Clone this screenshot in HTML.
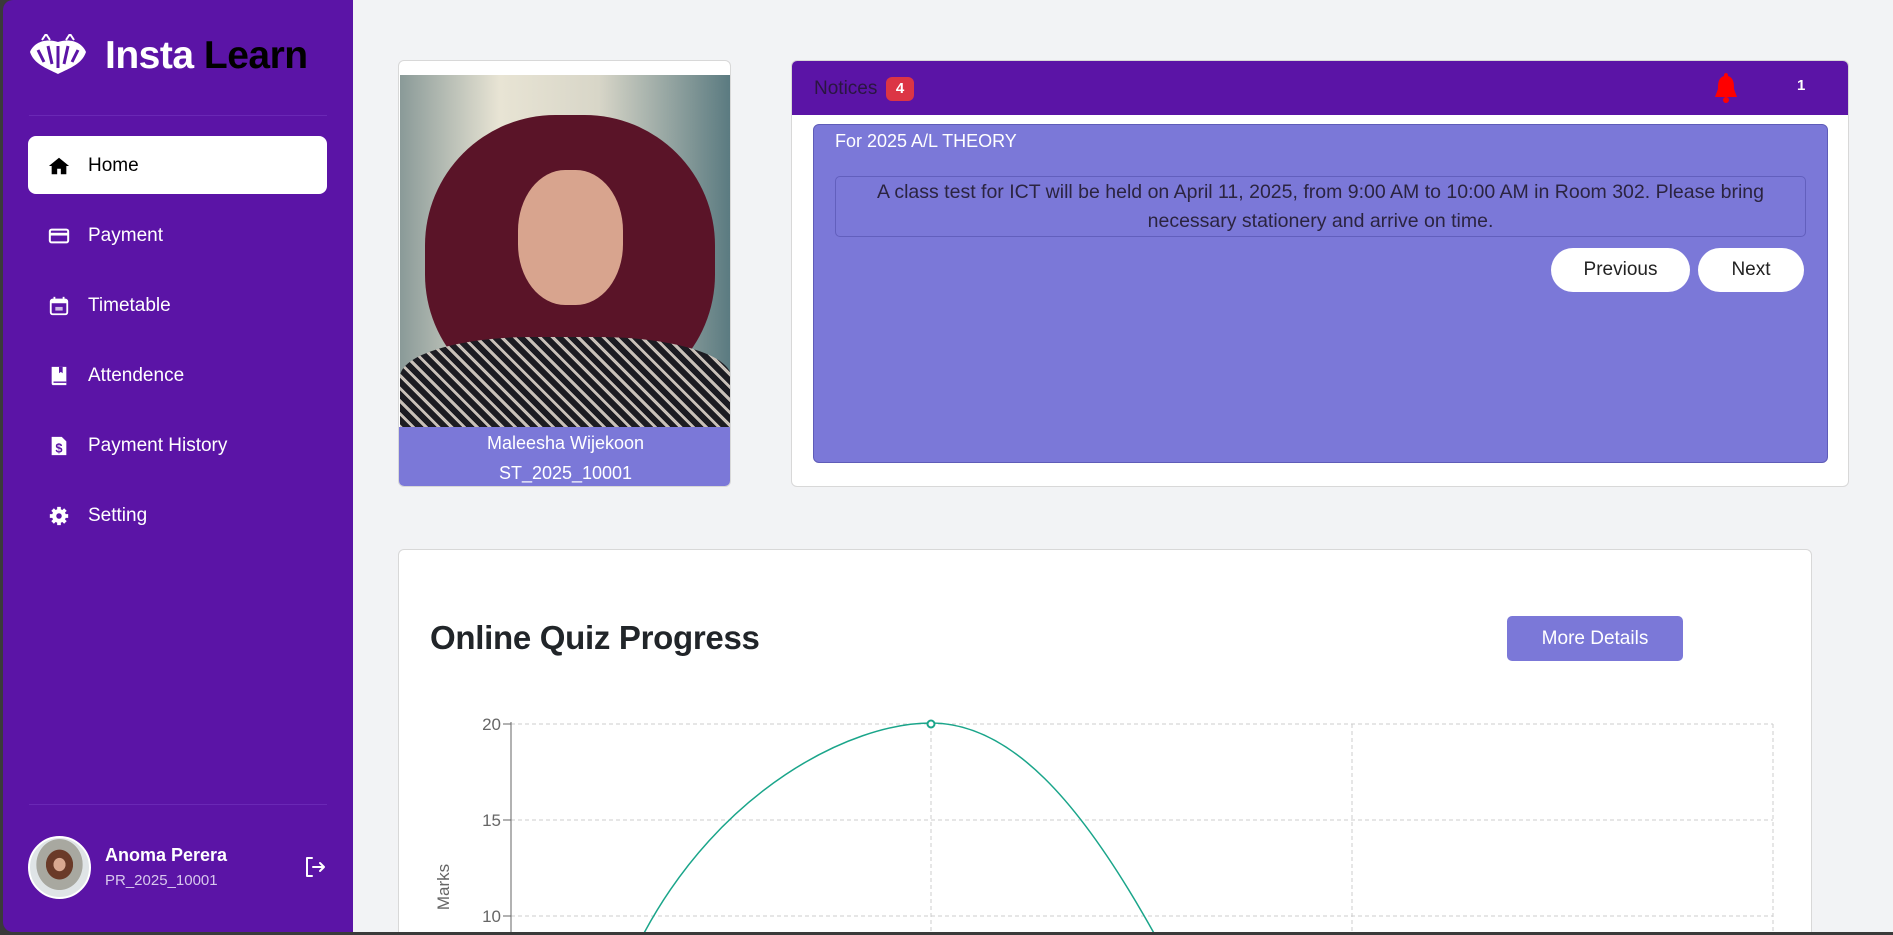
<!DOCTYPE html>
<html><head><meta charset="utf-8"><style>
*{box-sizing:border-box;margin:0;padding:0}
html,body{width:1893px;height:935px;overflow:hidden}
body{background:#3a3a3a;font-family:"Liberation Sans",sans-serif;position:relative}
.abs{position:absolute}
#side{left:3px;top:0;width:350px;height:932px;background:#5b14a6;border-radius:10px 0 0 10px}
#main{left:353px;top:0;width:1540px;height:932px;background:#f2f3f5;overflow:hidden}
.nav{position:absolute;left:48px;color:#fff;font-size:19px;display:flex;align-items:center}
.nav svg{width:22px;height:22px;margin-right:18px}
.card{position:absolute;background:#fff;border:1px solid #d8d8d8;border-radius:6px}
</style></head><body>
<div id="side" class="abs"></div>
<div id="main" class="abs">
<div class="card" style="left:45px;top:549px;width:1414px;height:420px"></div>
</div>

<!-- logo -->
<svg class="abs" style="left:28px;top:34px" width="60" height="40" viewBox="0 0 60 40">
<path d="M30 8 C18 4 6 8 2 18 C6 30 18 34 30 40 C42 34 54 30 58 18 C54 8 42 4 30 8Z" fill="#fff"/>
<path d="M30 12 L30 34 M20 12 L24 30 M40 12 L36 30 M10 16 L16 28 M50 16 L44 28" stroke="#5b14a6" stroke-width="3"/>
<path d="M14 6 L18 0 L22 6 M38 6 L42 0 L46 6" stroke="#fff" stroke-width="2" fill="none"/>
</svg>
<div class="abs" style="left:105px;top:34px;font-size:39px;font-weight:bold;color:#fff;letter-spacing:-0.5px">Insta <span style="color:#000">Learn</span></div>
<div class="abs" style="left:29px;top:115px;width:298px;height:1px;background:#6a28b5"></div>

<div class="abs" style="left:28px;top:136px;width:299px;height:58px;background:#fff;border-radius:8px"></div>
<div class="nav" style="top:155px;color:#000">
<svg viewBox="0 0 24 24"><path d="M12 3 L1 12 L4 12 L4 21 L10 21 L10 15 L14 15 L14 21 L20 21 L20 12 L23 12 Z" fill="#000"/></svg>Home</div>
<div class="nav" style="top:225px"><svg viewBox="0 0 24 24"><rect x="2" y="5" width="20" height="14" rx="2" fill="none" stroke="#fff" stroke-width="2.2"/><rect x="2" y="8.5" width="20" height="3" fill="#fff"/></svg>Payment</div>
<div class="nav" style="top:295px"><svg viewBox="0 0 24 24"><rect x="3" y="5" width="18" height="16" rx="2" fill="none" stroke="#fff" stroke-width="2"/><rect x="3" y="5" width="18" height="4" fill="#fff"/><rect x="6" y="2" width="2" height="4" fill="#fff"/><rect x="16" y="2" width="2" height="4" fill="#fff"/><rect x="8" y="13" width="8" height="4" fill="#fff" opacity=".7"/></svg>Timetable</div>
<div class="nav" style="top:365px"><svg viewBox="0 0 24 24"><path d="M4 2 H20 V22 H6 A2 2 0 0 1 4 20 Z" fill="#fff"/><path d="M12 2 V9 L14 7.5 L16 9 V2" fill="#5b14a6"/><rect x="6" y="18" width="14" height="1.5" fill="#5b14a6"/></svg>Attendence</div>
<div class="nav" style="top:435px"><svg viewBox="0 0 24 24"><path d="M4 2 H15 L20 7 V22 H4 Z" fill="#fff"/><text x="12" y="19" font-size="14" font-weight="bold" text-anchor="middle" fill="#5b14a6" font-family="Liberation Sans">$</text></svg>Payment History</div>
<div class="nav" style="top:505px"><svg viewBox="0 0 24 24"><circle cx="12" cy="12" r="7.5" fill="#fff"/><g stroke="#fff" stroke-width="4"><path d="M12 2V22M2 12H22M5 5L19 19M19 5L5 19"/></g><circle cx="12" cy="12" r="3" fill="#5b14a6"/></svg>Setting</div>

<div class="abs" style="left:29px;top:804px;width:298px;height:1px;background:#6a28b5"></div>
<div class="abs" style="left:28px;top:836px;width:63px;height:63px;border-radius:50%;border:2px solid #fff;background:radial-gradient(ellipse at 50% 45%,#d9a890 0 14%,#6a3a28 15% 32%,#a8a8a0 33% 55%,#dfe4e6 56%)"></div>
<div class="abs" style="left:105px;top:845px;color:#fff;font-size:18px;font-weight:bold">Anoma Perera</div>
<div class="abs" style="left:105px;top:872px;color:#d8c8ee;font-size:15px">PR_2025_10001</div>
<svg class="abs" style="left:303px;top:855px" width="24" height="24" viewBox="0 0 24 24" fill="none" stroke="#fff" stroke-width="2" stroke-linecap="round" stroke-linejoin="round"><path d="M9 3H4V21H9M10 12H21M17 8L21 12L17 16"/></svg>

<!-- profile card -->
<div class="card" style="left:398px;top:60px;width:333px;height:427px;overflow:hidden">
<div class="abs" style="left:1px;top:14px;width:331px;height:352px;background:linear-gradient(90deg,#8a9a98,#e8e4d4 30%,#d8d6c8 60%,#5a7a80);overflow:hidden">
<div class="abs" style="left:25px;top:40px;width:290px;height:290px;border-radius:45%;background:#5a1428"></div>
<div class="abs" style="left:118px;top:95px;width:105px;height:135px;border-radius:45%;background:#d8a48e"></div>
<div class="abs" style="left:0;top:262px;width:331px;height:100px;border-radius:40% 40% 0 0;background:repeating-linear-gradient(45deg,#1c1c22 0 6px,#c8c0b8 6px 9px)"></div>
</div>
<div class="abs" style="left:0;top:366px;width:333px;height:61px;background:#7b78d8;color:#fff;text-align:center;font-size:18px;line-height:30px;padding-top:1px">Maleesha Wijekoon<br>ST_2025_10001</div>
</div>

<!-- notices -->
<div class="card" style="left:791px;top:60px;width:1058px;height:427px;overflow:hidden">
<div class="abs" style="left:0;top:0;width:1058px;height:54px;background:#5b14a6"></div>
<div class="abs" style="left:22px;top:17px;font-size:19px;color:#2a1640">Notices</div>
<div class="abs" style="left:94px;top:16px;width:28px;height:24px;background:#dc3545;border-radius:6px;color:#fff;font-weight:bold;font-size:15px;text-align:center;line-height:24px">4</div>
<svg class="abs" style="left:919px;top:10px" width="30" height="34" viewBox="0 0 30 34"><path d="M15 2 C13 2 13 4 13 5 C7 7 7 13 7 18 L4 26 H26 L23 18 C23 13 23 7 17 5 C17 4 17 2 15 2Z" fill="#f00"/><circle cx="15" cy="29" r="3" fill="#f00"/></svg>
<div class="abs" style="left:1005px;top:16px;font-size:15px;font-weight:bold;color:#fff">1</div>
<div class="abs" style="left:21px;top:63px;width:1015px;height:339px;background:#7b78d8;border:1px solid #5f5cb8;border-radius:6px"></div>
<div class="abs" style="left:43px;top:70px;color:#fff;font-size:18px">For 2025 A/L THEORY</div>
<div class="abs" style="left:43px;top:115px;width:971px;height:61px;border:1px solid #625fbd;border-radius:5px;color:#2b2440;font-size:19.5px;text-align:center;line-height:29px;padding-top:1px">A class test for ICT will be held on April 11, 2025, from 9:00 AM to 10:00 AM in Room 302. Please bring<br>necessary stationery and arrive on time.</div>
<div class="abs" style="left:759px;top:187px;width:139px;height:44px;background:#fff;border-radius:22px;text-align:center;line-height:44px;font-size:19px;color:#222">Previous</div>
<div class="abs" style="left:906px;top:187px;width:106px;height:44px;background:#fff;border-radius:22px;text-align:center;line-height:44px;font-size:19px;color:#222">Next</div>
</div>

<div class="abs" style="left:430px;top:619px;font-size:33px;font-weight:bold;color:#212529;letter-spacing:-0.3px">Online Quiz Progress</div>
<div class="abs" style="left:1507px;top:616px;width:176px;height:45px;background:#7b78d8;border-radius:5px;color:#fff;font-size:19px;text-align:center;line-height:45px">More Details</div>
<svg class="abs" style="left:0;top:0" width="1893" height="932" viewBox="0 0 1893 932">
<g stroke="#ccc" stroke-width="1" stroke-dasharray="4 3" fill="none">
<path d="M511 724H1773M511 820H1773M511 916H1773"/>
<path d="M931 724V932M1352 724V932M1773 724V932"/>
</g>
<path d="M511 722V932M503 724H511M503 820H511M503 916H511" stroke="#666" stroke-width="1"/>
<g font-family="Liberation Sans" font-size="17" fill="#666" text-anchor="end">
<text x="501" y="730">20</text><text x="501" y="826">15</text><text x="501" y="922">10</text>
</g>
<text x="449" y="887" font-family="Liberation Sans" font-size="17" fill="#666" text-anchor="middle" transform="rotate(-90 449 887)">Marks</text>
<path d="M643 935 C720 790 850 723 931 723 C1010 723 1080 800 1155 935" stroke="#1aa58a" stroke-width="1.5" fill="none"/>
<circle cx="931" cy="724" r="3.5" fill="#fff" stroke="#1aa58a" stroke-width="2"/>
</svg>
</body></html>
